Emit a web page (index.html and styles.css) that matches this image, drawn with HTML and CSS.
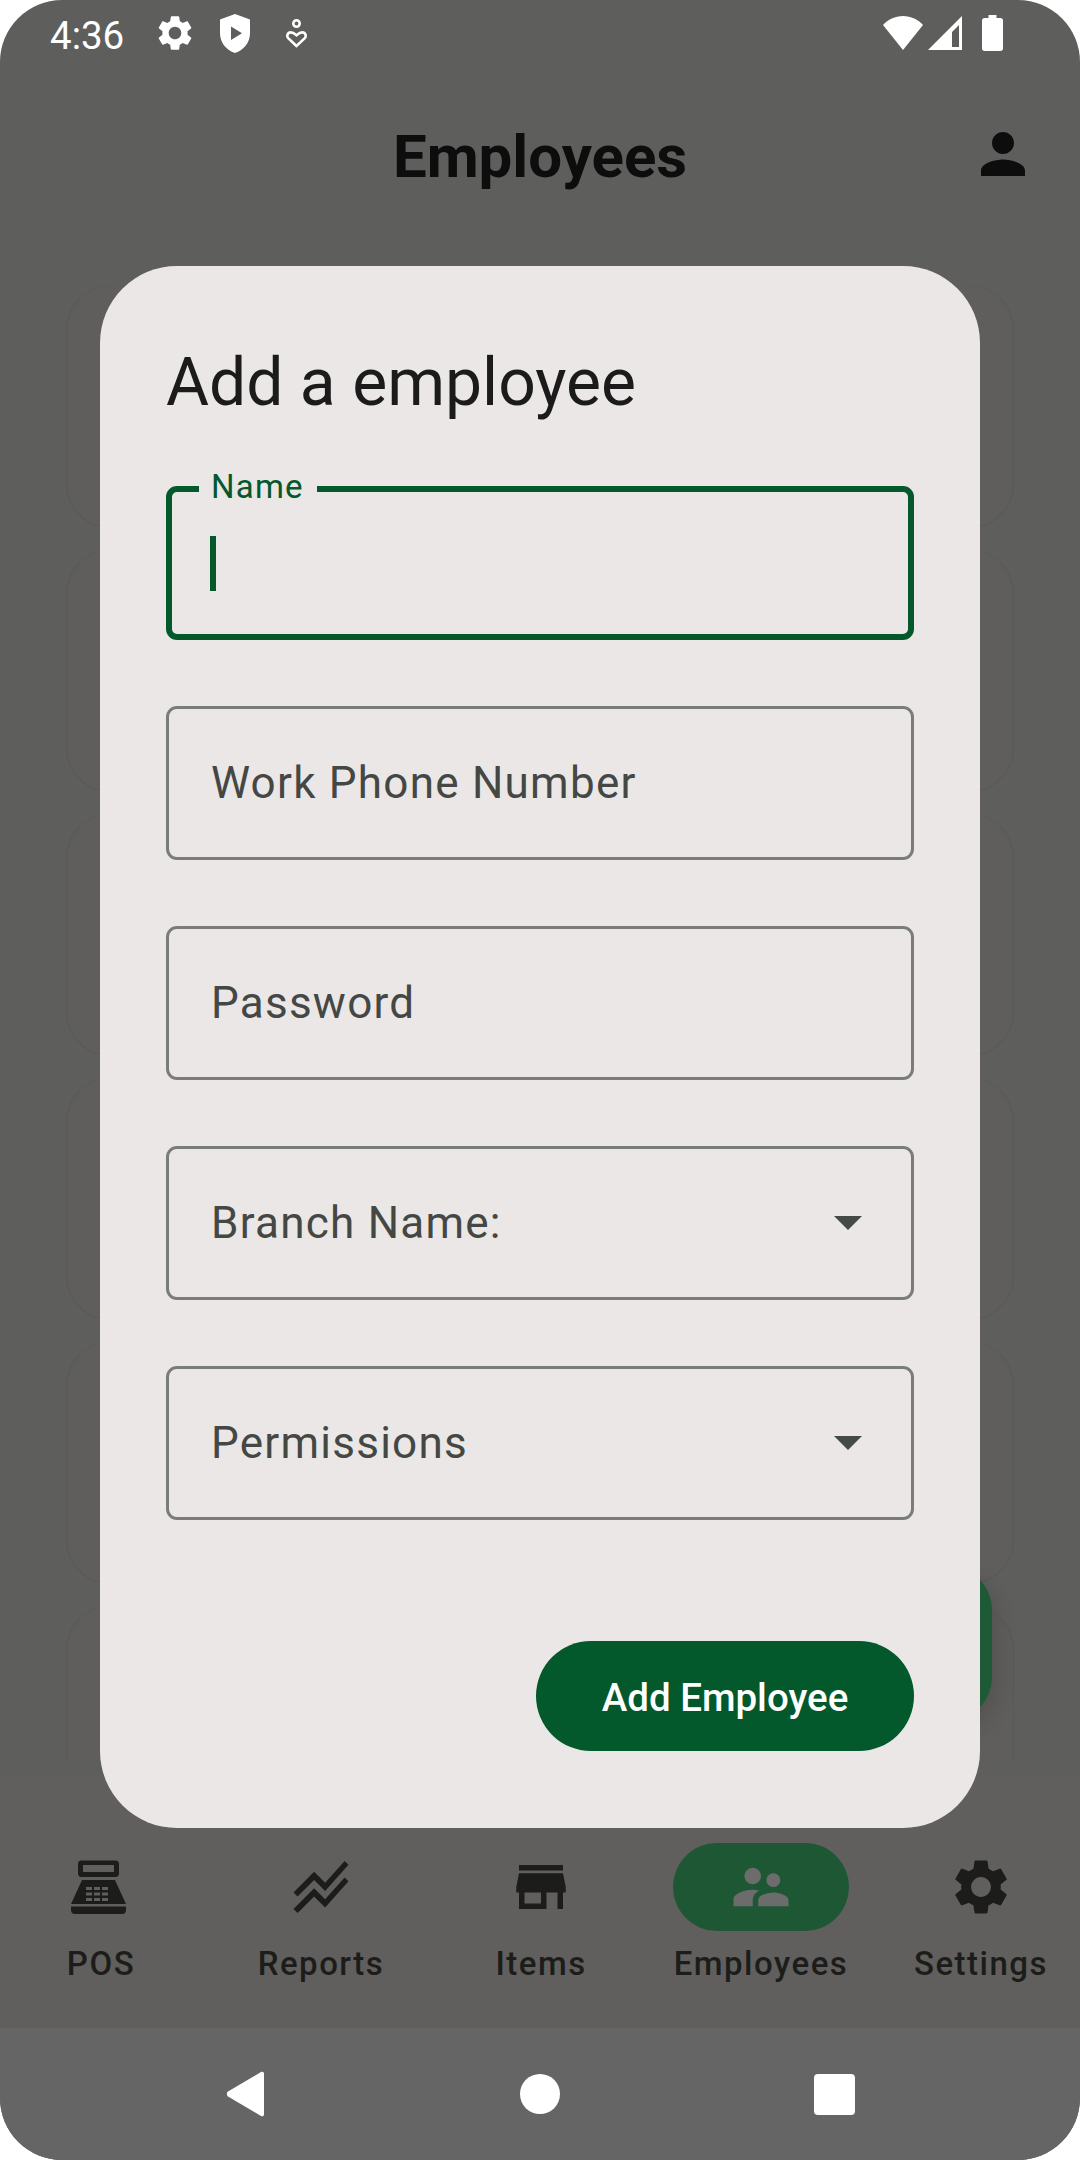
FILE: index.html
```html
<!DOCTYPE html>
<html lang="en">
<head>
<meta charset="utf-8">
<title>Employees</title>
<link rel="stylesheet" href="styles.css">
</head>
<body>
<div class="phone">
  <header class="status">
    <div class="status-left">
      <span class="time">4:36</span>
      <svg class="st-gear" viewBox="0 0 24 24"><path d="M19.14 12.94c.04-.3.06-.61.06-.94 0-.32-.02-.64-.07-.94l2.03-1.58c.18-.14.23-.41.12-.61l-1.92-3.32c-.12-.22-.37-.29-.59-.22l-2.39.96c-.5-.38-1.03-.7-1.62-.94l-.36-2.54c-.04-.24-.24-.41-.48-.41h-3.84c-.24 0-.43.17-.47.41l-.36 2.54c-.59.24-1.13.57-1.62.94l-2.39-.96c-.22-.08-.47 0-.59.22L2.74 8.87c-.12.21-.08.47.12.61l2.03 1.58c-.05.3-.09.63-.09.94s.02.64.07.94l-2.03 1.58c-.18.14-.23.41-.12.61l1.92 3.32c.12.22.37.29.59.22l2.39-.96c.5.38 1.03.7 1.62.94l.36 2.54c.05.24.24.41.48.41h3.84c.24 0 .44-.17.47-.41l.36-2.54c.59-.24 1.13-.56 1.62-.94l2.39.96c.22.08.47 0 .59-.22l1.92-3.32c.12-.22.07-.47-.12-.61l-2.01-1.58zM12 15.6c-1.98 0-3.6-1.62-3.6-3.6s1.62-3.6 3.6-3.6 3.6 1.62 3.6 3.6-1.62 3.6-3.6 3.6z"/></svg>
      <svg class="st-shield" viewBox="0 0 30 39"><path fill-rule="evenodd" d="M15 0 30 5.500V19C30 28.500 24 36 15 39 6 36 0 28.500 0 19V5.500ZM11 12.500V26L22 19.200Z"/></svg>
      <svg class="st-heart" viewBox="0 0 21 29"><circle cx="10.500" cy="4.500" r="3.200" class="st-line"/><path class="st-line" d="M10.500 27 2.200 19.200C.4 17.200 1.600 13.400 4.600 13.400 7 13.400 8.600 14.600 10.500 16.200 12.400 14.600 14 13.400 16.400 13.400 19.400 13.400 20.600 17.200 18.800 19.200Z"/></svg>
    </div>
    <div class="status-right">
      <svg class="st-wifi" viewBox="0 0 40 34"><path d="M20 34 0 9C5 3.500 12 0 20 0S35 3.500 40 9Z"/></svg>
      <svg class="st-signal" viewBox="0 0 34 34"><path fill-rule="evenodd" d="M34 0V34H0ZM31 9 24 16V31H31Z"/></svg>
      <svg class="st-battery" viewBox="0 0 21 36"><path d="M6.500 0H14.500V3H18.500C20 3 21 4 21 5.500V33.500C21 35 20 36 18.500 36H2.500C1 36 0 35 0 33.500V5.500C0 4 1 3 2.500 3H6.500Z"/></svg>
    </div>
  </header>

  <div class="appbar">
    <h1 class="appbar-title">Employees</h1>
    <svg class="appbar-person" viewBox="0 0 24 24"><path d="M12 12c2.210 0 4-1.790 4-4s-1.790-4-4-4-4 1.790-4 4 1.790 4 4 4zm0 2c-2.670 0-8 1.340-8 4v2h16v-2c0-2.660-5.330-4-8-4z"/></svg>
  </div>

  <main class="content">
    <div class="list">
      <div class="card"></div>
      <div class="card"></div>
      <div class="card"></div>
      <div class="card"></div>
      <div class="card"></div>
      <div class="card"></div>
    </div>
    <div class="fab"></div>
  </main>

  <nav class="bottom">
    <div class="tab">
      <span class="tab-icon">
        <svg class="icon" viewBox="0 0 66 66"><path fill-rule="evenodd" d="M13.500 6.500H47.500Q51 6.500 51 10V19Q51 23 47.500 23H13.500Q10 23 10 19V10Q10 6.500 13.500 6.500ZM15 11V18H46V11Z"/><path fill-rule="evenodd" d="M14 26H47L58 50H3ZM18 33V36H24V33ZM26 33V36H32V33ZM34 33V36H40V33ZM18 38.500V41.500H24V38.500ZM26 38.500V41.500H32V38.500ZM34 38.500V41.500H40V38.500ZM18 44V47H24V44ZM26 44V47H32V44ZM34 44V47H40V44Z"/><path d="M3 52.500H58V56Q58 60 54 60H7Q3 60 3 56Z"/></svg>
      </span>
      <span class="tab-label">POS</span>
    </div>
    <div class="tab">
      <span class="tab-icon">
        <svg class="icon" viewBox="0 0 24 24"><path d="M2 19.990l7.500-7.510 4 4 7.090-7.970L22 9.920l-8.500 9.560-4-4-6 6.010-1.500-1.500zm1.500-4.500l6-6.010 4 4L22 3.920l-1.410-1.410-7.090 7.970-4-4L2 13.990l1.500 1.500z"/></svg>
      </span>
      <span class="tab-label">Reports</span>
    </div>
    <div class="tab">
      <span class="tab-icon">
        <svg class="icon" viewBox="0 0 24 24"><path d="M20 4H4v2h16V4zm1 10v-2l-1-5H4l-1 5v2h1v6h10v-6h4v6h2v-6h1zm-9 4H6v-4h6v4z"/></svg>
      </span>
      <span class="tab-label">Items</span>
    </div>
    <div class="tab">
      <span class="tab-icon tab-icon-active">
        <svg class="icon icon-active" viewBox="0 0 24 24"><path d="M16.500 12c1.380 0 2.490-1.120 2.490-2.500S17.880 7 16.500 7C15.120 7 14 8.120 14 9.500s1.120 2.500 2.500 2.500zM9 11c1.660 0 2.990-1.340 2.990-3S10.660 5 9 5C7.340 5 6 6.340 6 8s1.340 3 3 3zm7.500 3c-1.830 0-5.500.92-5.500 2.750V19h11v-2.250c0-1.830-3.670-2.750-5.500-2.750zM9 13c-2.330 0-7 1.170-7 3.500V19h7v-2.250c0-.85.33-2.340 2.370-3.470C10.500 13.100 9.660 13 9 13z"/></svg>
      </span>
      <span class="tab-label">Employees</span>
    </div>
    <div class="tab">
      <span class="tab-icon">
        <svg class="icon" viewBox="0 0 24 24"><path d="M19.140 12.940c.04-.3.06-.61.06-.94 0-.32-.02-.64-.07-.94l2.030-1.580c.18-.14.23-.41.12-.61l-1.920-3.320c-.12-.22-.37-.29-.59-.22l-2.390.96c-.5-.38-1.030-.7-1.620-.94l-.36-2.540c-.04-.24-.24-.41-.48-.41h-3.840c-.24 0-.43.17-.47.41l-.36 2.540c-.59.24-1.130.57-1.620.94l-2.390-.96c-.22-.08-.47 0-.59.22L2.740 8.870c-.12.21-.08.47.12.61l2.030 1.580c-.05.3-.09.63-.09.94s.02.64.07.94l-2.030 1.580c-.18.14-.23.41-.12.61l1.920 3.320c.12.22.37.29.59.22l2.390-.96c.5.38 1.030.7 1.620.94l.36 2.540c.05.24.24.41.48.41h3.840c.24 0 .44-.17.47-.41l.36-2.540c.59-.24 1.130-.56 1.620-.94l2.390.96c.22.08.47 0 .59-.22l1.920-3.320c.12-.22.07-.47-.12-.61l-2.010-1.580zM12 15.600c-1.980 0-3.600-1.620-3.600-3.600s1.620-3.600 3.600-3.600 3.600 1.620 3.600 3.600-1.620 3.600-3.600 3.600z"/></svg>
      </span>
      <span class="tab-label">Settings</span>
    </div>
  </nav>

  <footer class="sysnav">
    <svg class="sys-back" viewBox="0 0 40 46"><path d="M38 2.500V43.500C38 45 36.500 45.800 35 45L2 25.500C.5 24.500.5 21.500 2 20.500L35 1C36.500.2 38 1 38 2.500Z"/></svg>
    <span class="sys-home"></span>
    <span class="sys-recent"></span>
  </footer>

  <section class="dialog">
    <h2 class="dialog-title">Add a employee</h2>
    <div class="fields">
      <div class="field field-focus">
        <span class="field-label">Name</span>
        <span class="caret"></span>
      </div>
      <div class="field"><span class="field-text">Work Phone Number</span></div>
      <div class="field"><span class="field-text">Password</span></div>
      <div class="field"><span class="field-text">Branch Name:</span><span class="arrow"></span></div>
      <div class="field"><span class="field-text">Permissions</span><span class="arrow"></span></div>
    </div>
    <div class="dialog-actions">
      <button class="primary" type="button">Add Employee</button>
    </div>
  </section>
</div>
</body>
</html>
```
FILE: styles.css
```css
* { box-sizing: border-box; }
html, body { margin: 0; padding: 0; background: #fff; }
body { font-family: Roboto, "Liberation Sans", sans-serif; }

.phone {
  position: relative;
  width: 1080px;
  height: 2160px;
  display: flex;
  flex-direction: column;
  overflow: hidden;
  border-radius: 62px;
  background: #5e5e5c;
}

/* status bar */
.status {
  height: 66px;
  flex: none;
  display: flex;
  align-items: center;
  justify-content: space-between;
  padding: 0 77px 0 50px;
  fill: #fff;
  color: #fff;
}
.status-left, .status-right { display: flex; align-items: center; }
.time { font-size: 38.5px; width: 109px; line-height: 66px; margin-top: 6px; }
.st-gear { width: 42px; height: 42px; margin-left: -5px; }
.st-shield { width: 30px; height: 39px; margin-left: 24px; }
.st-heart { width: 21px; height: 29px; margin-left: 36px; }
.st-line { fill: none; stroke: #fff; stroke-width: 2.6; }
.status-right { gap: 5px; }
.st-wifi { width: 40px; height: 34px; }
.st-signal { width: 34px; height: 34px; }
.st-battery { width: 21px; height: 36px; margin-left: 15px; }

/* app bar */
.appbar {
  height: 176px;
  flex: none;
  display: flex;
  align-items: center;
  justify-content: center;
  position: relative;
}
.appbar-title {
  margin: 6px 0 0;
  font-size: 60px;
  font-weight: 700;
  color: #0d0d0d;
  line-height: 66px;
}
.appbar-person {
  position: absolute;
  right: 44px;
  top: 55px;
  width: 66px;
  height: 66px;
  fill: #0d0d0d;
}

/* list behind dialog */
.content {
  flex: 1;
  position: relative;
  min-height: 0;
}
.list {
  display: flex;
  flex-direction: column;
  gap: 22px;
  margin: 0 66px;
  padding: 44px 0 0;
  height: 1521px;
  overflow: hidden;
}
.card {
  flex: none;
  height: 242px;
  border-radius: 44px;
  background: #5f5e5c;
  border: 1px solid #595957;
  border-top-color: #5c5c5a;
}
.fab {
  position: absolute;
  right: 88px;
  top: 1324px;
  width: 154px;
  height: 155px;
  border-radius: 44px;
  background: #1e5a36;
  box-shadow: 4px 10px 20px rgba(40, 20, 30, .18);
}

/* bottom navigation */
.bottom {
  height: 250px;
  flex: none;
  display: grid;
  grid-template-columns: repeat(5, 220px);
  justify-content: center;
  padding: 65px 0 0 2px;
  background: #605f5d;
  color: #1c1d1a;
  fill: #1c1d1a;
}
.tab {
  display: flex;
  flex-direction: column;
  align-items: center;
}
.tab-icon {
  width: 176px;
  height: 88px;
  border-radius: 44px;
  display: flex;
  align-items: center;
  justify-content: center;
}
.tab-icon-active { background: #1e5734; }
.icon { width: 66px; height: 66px; display: block; }
.icon-active { fill: #6c6c6c; }
.tab-label {
  margin-top: 11px;
  font-size: 33px;
  line-height: 44px;
  font-weight: 500;
  letter-spacing: 1.5px;
  white-space: nowrap;
}

/* system navigation */
.sysnav {
  height: 132px;
  flex: none;
  background: #656565;
  display: grid;
  grid-template-columns: repeat(3, 294px);
  justify-content: center;
  align-items: center;
  justify-items: center;
}
.sys-back { width: 40px; height: 46px; fill: #fff; }
.sys-home { width: 40px; height: 40px; border-radius: 50%; background: #fff; }
.sys-recent { width: 41px; height: 41px; border-radius: 4px; background: #fff; }

/* dialog */
.dialog {
  position: absolute;
  left: 100px;
  top: 266px;
  width: 880px;
  height: 1562px;
  border-radius: 77px;
  background: #eae7e6;
  padding: 73px 66px 77px;
  display: flex;
  flex-direction: column;
}
.dialog-title {
  margin: 0 0 59px;
  font-size: 66px;
  line-height: 88px;
  font-weight: 400;
  color: #1c1b1b;
}
.fields {
  display: flex;
  flex-direction: column;
  gap: 66px;
}
.field {
  position: relative;
  height: 154px;
  border: 3px solid #797c78;
  border-radius: 11px;
  display: flex;
  align-items: center;
  justify-content: space-between;
  padding: 0 42px;
}
.field-text {
  font-size: 44px;
  letter-spacing: 1.25px;
  color: #444744;
}
.field-focus { border: 6px solid #03582c; padding: 0 38px; }
.field-label {
  position: absolute;
  left: 27px;
  top: -27px;
  padding: 0 13px 0 12px;
  background: #eae7e6;
  font-size: 33px;
  line-height: 44px;
  letter-spacing: 1.2px;
  color: #03582c;
}
.caret {
  width: 5.5px;
  height: 55px;
  background: #03582c;
}
.arrow {
  width: 0;
  height: 0;
  margin-right: 7px;
  border-left: 14px solid transparent;
  border-right: 14px solid transparent;
  border-top: 14px solid #444a44;
}
.dialog-actions {
  margin-top: auto;
  display: flex;
  justify-content: flex-end;
}
.primary {
  width: 378px;
  height: 110px;
  border: 0;
  border-radius: 55px;
  padding: 2px 0 0;
  background: #03582c;
  color: #fff;
  font-family: inherit;
  font-size: 38.5px;
  font-weight: 500;
}
```
